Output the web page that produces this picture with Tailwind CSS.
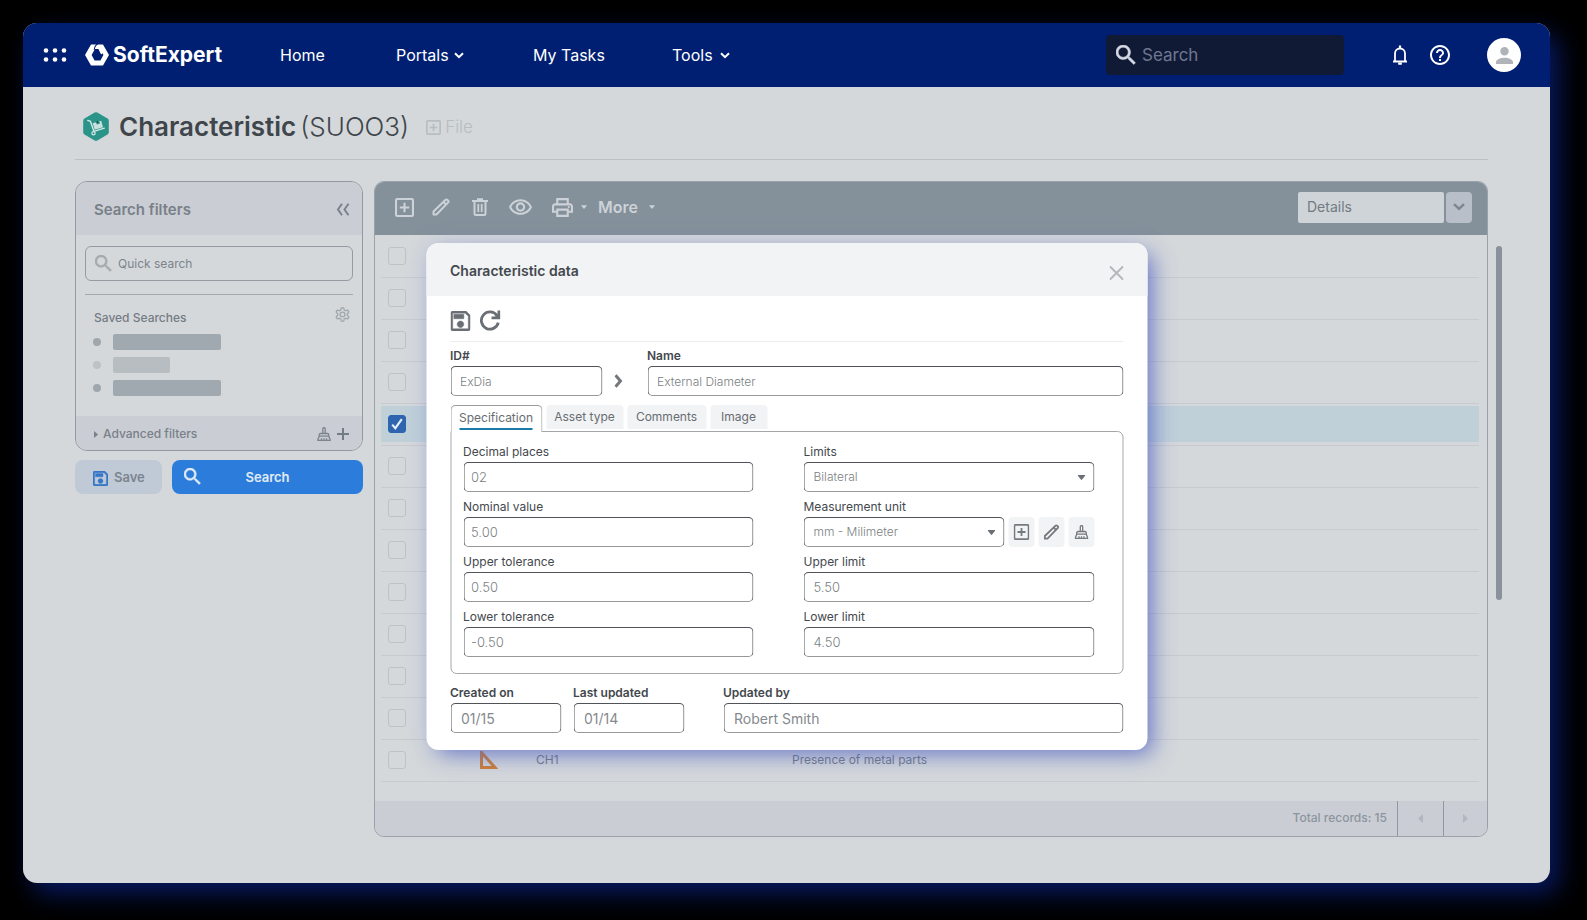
<!DOCTYPE html>
<html lang="en">
<head>
<meta charset="utf-8">
<meta name="viewport" content="width=device-width, initial-scale=1">
<title>SoftExpert – Characteristic (SU003)</title>
<script src="https://cdn.jsdelivr.net/npm/@tailwindcss/browser@4"></script>
</head>
<body class="min-h-screen bg-black pt-[23px] pr-[37px] pb-[37px] pl-[23px] font-['Inter','Open_Sans',sans-serif] text-[#6b737d]">

<!-- Icon sprite -->
<svg class="hidden" aria-hidden="true">
  <symbol id="i-search" viewBox="3 3 18 18"><path fill="currentColor" stroke="currentColor" stroke-width=".5" d="M15.5 14h-.79l-.28-.27C15.41 12.59 16 11.11 16 9.5 16 5.91 13.09 3 9.5 3S3 5.91 3 9.5 5.91 16 9.5 16c1.61 0 3.09-.59 4.23-1.57l.27.28v.79l5 4.99L20.49 19l-4.99-5zm-6 0C7.01 14 5 11.99 5 9.5S7.01 5 9.5 5 14 7.01 14 9.5 11.99 14 9.5 14z"/></symbol>
  <symbol id="i-save" viewBox="3 3 18 18"><path fill="currentColor" stroke="currentColor" stroke-width=".4" d="M17 3H5c-1.11 0-2 .9-2 2v14c0 1.1.89 2 2 2h14c1.1 0 2-.9 2-2V7l-4-4zm2 16H5V5h11.17L19 7.83V19zm-7-7c-1.66 0-3 1.34-3 3s1.34 3 3 3 3-1.34 3-3-1.34-3-3-3zM6 6h9v4H6z"/></symbol>
  <symbol id="i-refresh" viewBox="0 0 21 21"><g fill="none" stroke="currentColor" stroke-width="2.800"><path d="M17.500 5.600A8.600 8.600 0 1 0 18.800 12.600"/><path d="M12 7.900h7.400V.5"/></g><path fill="currentColor" d="M14 8.600h6V2z"/></symbol>
  <symbol id="i-add" viewBox="0 0 18 18"><g fill="none" stroke="currentColor" stroke-width="2"><rect x="1" y="1" width="16" height="16" rx="1"/><path d="M9 4.500v9M4.500 9h9"/></g></symbol>
  <symbol id="i-edit" viewBox="0 0 18 18"><g fill="none" stroke="currentColor" stroke-width="2" stroke-linejoin="round"><path d="M1.500 16.500v-3L13.600 1.800c.5-.5 1.100-.5 1.600 0l1 1c.5.500.5 1.100 0 1.600L4.500 16.500z"/><path d="M11.500 4l2.600 2.600"/></g></symbol>
  <symbol id="i-trash" viewBox="0 0 16 18"><g fill="none" stroke="currentColor" stroke-width="2"><path d="M0 3h16M5 1.200h6M2.500 3v12.500q0 1.500 1.500 1.500h8q1.500 0 1.500-1.500V3"/><path stroke-width="1.800" d="M6.300 6v8M9.700 6v8"/></g></symbol>
  <symbol id="i-eye" viewBox="1 3 22 17"><path fill="currentColor" d="M12 6c3.790 0 7.170 2.130 8.820 5.500C19.170 14.870 15.790 17 12 17s-7.170-2.130-8.820-5.500C4.830 8.130 8.210 6 12 6m0-2C7 4 2.730 7.110 1 11.500 2.730 15.890 7 19 12 19s9.270-3.110 11-7.500C21.270 7.110 17 4 12 4zm0 5c1.380 0 2.500 1.120 2.500 2.500S13.380 14 12 14s-2.500-1.120-2.500-2.500S10.620 9 12 9m0-2c-2.480 0-4.500 2.020-4.500 4.500S9.520 16 12 16s4.500-2.020 4.500-4.500S14.480 7 12 7z"/></symbol>
  <symbol id="i-print" viewBox="2 3 20 18"><path fill="currentColor" d="M19 8h-1V3H6v5H5c-1.660 0-3 1.340-3 3v6h4v4h12v-4h4v-6c0-1.660-1.340-3-3-3zM8 5h8v3H8V5zm8 12v2H8v-4h8v2zm2-2v-2H6v2H4v-4c0-.55.45-1 1-1h14c.55 0 1 .45 1 1v4h-2z"/><circle cx="18" cy="11.500" r="1" fill="currentColor"/></symbol>
  <symbol id="i-broom" viewBox="0 0 14 14"><g fill="none" stroke="currentColor" stroke-width="1.300" stroke-linejoin="round"><path d="M5.800 6.500V1.800a1.200 1.200 0 0 1 2.400 0v4.700M2.200 9.200V8q0-1.500 1.500-1.500h6.600q1.500 0 1.500 1.500v1.200M2.200 9.200h9.600l1.500 4.100H.7z"/><path d="M4.500 13v-1.800M7 13v-1.800M9.500 13v-1.800"/></g></symbol>
  <symbol id="i-caret" viewBox="0 0 8 5"><path fill="currentColor" d="M.8 0h6.400q.9 0 .4.700L4.600 4.600q-.6.700-1.200 0L.4.700Q-.1 0 .8 0z"/></symbol>
  <symbol id="i-chevron" viewBox="0 0 10 7"><path fill="none" stroke="currentColor" stroke-width="2" d="M1 1.200l4 4 4-4"/></symbol>
  <symbol id="i-gear" viewBox="1 1 22 22"><g fill="none" stroke="currentColor" stroke-width="2"><path d="M12.220 2h-.44a2 2 0 0 0-2 2v.18a2 2 0 0 1-1 1.730l-.43.25a2 2 0 0 1-2 0l-.15-.08a2 2 0 0 0-2.730.73l-.22.38a2 2 0 0 0 .73 2.730l.15.1a2 2 0 0 1 1 1.720v.51a2 2 0 0 1-1 1.740l-.15.09a2 2 0 0 0-.73 2.730l.22.38a2 2 0 0 0 2.730.73l.15-.08a2 2 0 0 1 2 0l.43.25a2 2 0 0 1 1 1.730V20a2 2 0 0 0 2 2h.44a2 2 0 0 0 2-2v-.18a2 2 0 0 1 1-1.730l.43-.25a2 2 0 0 1 2 0l.15.08a2 2 0 0 0 2.730-.73l.22-.39a2 2 0 0 0-.73-2.730l-.15-.08a2 2 0 0 1-1-1.740v-.5a2 2 0 0 1 1-1.740l.15-.09a2 2 0 0 0 .73-2.730l-.22-.38a2 2 0 0 0-2.730-.73l-.15.08a2 2 0 0 1-2 0l-.43-.25a2 2 0 0 1-1-1.730V4a2 2 0 0 0-2-2z"/><circle cx="12" cy="12" r="3.500"/></g></symbol>
</svg>

<div class="relative rounded-[14px] bg-[#d4d8db] shadow-[9px_11px_26px_-1px_#081a66]">

  <header class="flex h-16 items-center rounded-t-[14px] bg-[#001f72] pr-[29px] pl-5 text-white">
    <button type="button" aria-label="Applications" class="shrink-0">
      <svg class="h-[14px] w-6" viewBox="0 0 24 14" fill="currentColor"><circle cx="3" cy="2.500" r="2.300"/><circle cx="12" cy="2.500" r="2.300"/><circle cx="21" cy="2.500" r="2.300"/><circle cx="3" cy="11.500" r="2.300"/><circle cx="12" cy="11.500" r="2.300"/><circle cx="21" cy="11.500" r="2.300"/></svg>
    </button>
    <a href="#" class="ml-[18px] flex w-[195px] shrink-0 items-center gap-1 text-[21px] leading-6 font-bold">
      <svg class="h-[22px] w-6" viewBox="0 0 24 22"><path fill="currentColor" fill-rule="evenodd" d="M6 .5h12L24 11l-6 10.500H6L0 11zM10 5L6.600 11l3 5.500h5.800l3-5.500-.9-1.800-1.400 1.400L13.400 5z"/><path fill="none" stroke="#001f72" stroke-width="1.200" d="M12.800 0q-3 1-3.600 5.800"/></svg>
      SoftExpert
    </a>
    <nav class="flex items-center text-base leading-6">
      <a href="#" class="w-[116px]">Home</a>
      <a href="#" class="flex w-[137px] items-center gap-[5px]">Portals <svg class="h-[7px] w-[10px]"><use href="#i-chevron"/></svg></a>
      <a href="#" class="w-[139px]">My Tasks</a>
      <a href="#" class="flex items-center gap-[7px]">Tools <svg class="h-[7px] w-[10px]"><use href="#i-chevron"/></svg></a>
    </nav>
    <label class="ml-auto flex h-[40px] w-[238px] items-center gap-[6px] rounded-sm bg-[#111a35] pl-[10px]">
      <svg class="size-5 shrink-0 text-[#d5dae6]"><use href="#i-search"/></svg>
      <input type="search" aria-label="Search" placeholder="Search" class="w-full min-w-0 bg-transparent pt-[2px] text-[17px] outline-none placeholder:text-[#6e7792]">
    </label>
    <button type="button" aria-label="Notifications" class="ml-[46px]"><svg class="h-5 w-5" viewBox="0 0 20 20" fill="none" stroke="currentColor" stroke-width="1.800"><path d="M3 16.500h14M5 16.500V8.500a5 5 0 0 1 10 0v8"/><path d="M10 .5v3M8.200 18.600h3.600" stroke-width="2.200"/></svg></button>
    <button type="button" aria-label="Help" class="ml-5"><svg class="h-5 w-5" viewBox="2 2 20 20"><path fill="currentColor" d="M11 18h2v-2h-2v2zm1-16C6.480 2 2 6.480 2 12s4.480 10 10 10 10-4.480 10-10S17.520 2 12 2zm0 18c-4.410 0-8-3.590-8-8s3.590-8 8-8 8 3.590 8 8-3.590 8-8 8zm0-14c-2.210 0-4 1.790-4 4h2c0-1.100.9-2 2-2s2 .9 2 2c0 2-3 1.750-3 5h2c0-2.250 3-2.500 3-5 0-2.210-1.790-4-4-4z"/></svg></button>
    <button type="button" aria-label="Account" class="ml-[37px] grid size-[34px] place-items-center rounded-full bg-white text-[#b0b3b8]"><svg class="h-[17px] w-[17px]" viewBox="4 4 16 16"><path fill="currentColor" d="M12 12c2.210 0 4-1.790 4-4s-1.790-4-4-4-4 1.790-4 4 1.790 4 4 4zm0 2c-2.670 0-8 1.340-8 4v2h16v-2c0-2.660-5.330-4-8-4z"/></svg></button>
  </header>

  <main class="pr-12 pb-[46px] pl-[52px]">
    <div class="mr-[14px] flex h-[73px] items-center border-b border-[#bbc0c4] pt-[7px] pl-2">
      <svg class="h-[29px] w-[26px]" viewBox="0 0 26 29"><path fill="#2a9488" d="M11.700.6q1.300-.7 2.600 0l10.200 5.900q1.300.8 1.300 2.200v11.600q0 1.400-1.300 2.200l-10.200 5.900q-1.300.7-2.600 0L1.500 22.500Q.2 21.700.2 20.300V8.700q0-1.400 1.300-2.200z"/><path fill="none" stroke="#d4e6e5" stroke-width="1.400" stroke-linecap="round" stroke-linejoin="round" d="M4.800 8.500l2.500.6L11 19.400l10.300-3.200"/><path fill="#c9e0de" d="M9.700 11.200l8.500-2.400 1.800 6.500-8.300 2.500z"/><path stroke="#2a9488" stroke-width="1.300" d="M13.300 9.800l.9 1.800 2-.6-.8-1.700"/><circle cx="10.500" cy="21.300" r="1.600" fill="#2a9488" stroke="#d4e6e5" stroke-width="1.300"/></svg>
      <h1 class="ml-[10px] flex gap-1 text-[26px] leading-8 font-semibold text-[#3f464b]">Characteristic <span class="font-light">(SUOO3)</span></h1>
      <button type="button" class="ml-[17px] flex items-center gap-1 pt-[2px] text-[17px] font-light text-[#b7bdc1]"><svg class="size-[15px]"><use href="#i-add"/></svg>File</button>
    </div>

    <div class="mt-[21px] flex items-start">
      <!-- Search filters -->
      <aside class="w-[288px] shrink-0">
        <section class="overflow-hidden rounded-xl border border-[#9299a2]">
          <div class="flex h-[53px] items-center justify-between bg-[#cacdd3] pr-3 pt-[2px] pl-[18px]">
            <h2 class="text-[15px] leading-6 font-semibold text-[#78808a]">Search filters</h2>
            <button type="button" aria-label="Collapse filters"><svg class="h-[13px] w-[14px]" viewBox="0 0 14 13" fill="none" stroke="#7a828c" stroke-width="2"><path d="M6 .8L2 6.500l4 5.700M12.500.8l-4 5.700 4 5.700"/></svg></button>
          </div>
          <div class="px-[9px] pt-[11px]">
            <label class="flex h-[35px] items-center gap-[6px] rounded-md border border-[#959ba3] pl-[9px]">
              <svg class="size-[17px] shrink-0 text-[#a4abb0]"><use href="#i-search"/></svg>
              <input type="search" aria-label="Quick search" placeholder="Quick search" class="w-full min-w-0 bg-transparent text-xs outline-none placeholder:text-[#7c848b]">
            </label>
            <div class="mt-[13px] border-t border-[#a2a8ad] pt-[11px] pb-5">
              <div class="flex h-5 items-center justify-between pr-[3px] pl-[9px]">
                <h3 class="pt-1 text-xs font-medium text-[#747c84]">Saved Searches</h3>
                <button type="button" aria-label="Search settings"><svg class="size-[15px] -mt-1 text-[#a0a7ae]"><use href="#i-gear"/></svg></button>
              </div>
              <ul class="mt-2 space-y-[7px] pl-2">
                <li class="flex h-4 items-center gap-3"><span class="size-2 rounded-full bg-[#9fa7ae]"></span><span class="h-4 w-[108px] rounded-xs bg-[#a1a9b0]"></span></li>
                <li class="flex h-4 items-center gap-3"><span class="size-2 rounded-full bg-[#bdc2c6]"></span><span class="h-4 w-[57px] rounded-xs bg-[#b8bdc1]"></span></li>
                <li class="flex h-4 items-center gap-3"><span class="size-2 rounded-full bg-[#9fa7ae]"></span><span class="h-4 w-[108px] rounded-xs bg-[#a1a9b0]"></span></li>
              </ul>
            </div>
          </div>
          <div class="flex h-[34px] items-center bg-[#cacdd3] pt-[2px] pr-[13px] pl-[18px]">
            <button type="button" class="mr-auto flex items-center gap-[5px] text-xs font-medium text-[#78808a]"><svg class="h-[7px] w-[4px]" viewBox="0 0 4 7"><path fill="currentColor" d="M0 0l4 3.500L0 7z"/></svg>Advanced filters</button>
            <button type="button" aria-label="Clear filters"><svg class="size-[14px] text-[#7c848c]"><use href="#i-broom"/></svg></button>
            <button type="button" aria-label="Add filter" class="ml-[6px]"><svg class="size-3" viewBox="0 0 12 12" stroke="#737b84" stroke-width="2"><path d="M6 0v12M0 6h12"/></svg></button>
          </div>
        </section>
        <div class="mt-[9px] flex gap-[10px]">
          <button type="button" class="flex h-[34px] w-[87px] items-center gap-[6px] rounded-lg bg-[#bfcad6] pt-[2px] pl-[18px] text-[13px] font-semibold text-[#7b858f]"><svg class="size-[15px] text-[#3576c8]"><use href="#i-save"/></svg>Save</button>
          <button type="button" class="relative flex h-[34px] flex-1 items-center justify-center rounded-lg bg-[#2c7ddb] pt-[2px] text-[13px] font-semibold text-[#e2ebf5]"><svg class="absolute top-2 left-[12px] size-[17px]"><use href="#i-search"/></svg>Search</button>
        </div>
      </aside>

      <!-- Records -->
      <section class="ml-[11px] min-w-0 flex-1 overflow-hidden rounded-[10px] border border-[#9aa1a9]">
        <div class="flex h-[53px] items-center bg-[#84909a] pr-[15px] pb-[3px] pl-5 text-[#ccd2d7]">
          <button type="button" aria-label="New"><svg class="size-[19px]"><use href="#i-add"/></svg></button>
          <button type="button" aria-label="Edit" class="ml-[18px]"><svg class="size-[18px]"><use href="#i-edit"/></svg></button>
          <button type="button" aria-label="Delete" class="ml-[22px]"><svg class="h-[18px] w-4"><use href="#i-trash"/></svg></button>
          <button type="button" aria-label="View" class="ml-[21px]"><svg class="h-[18px] w-[23px]"><use href="#i-eye"/></svg></button>
          <button type="button" aria-label="Print" class="ml-5 flex items-center gap-[8px]"><svg class="h-[19px] w-[21px]"><use href="#i-print"/></svg><svg class="h-1 w-[6px]"><use href="#i-caret"/></svg></button>
          <button type="button" class="ml-[11px] flex items-center gap-[11px] text-base font-semibold">More <svg class="h-1 w-[6px]"><use href="#i-caret"/></svg></button>
          <div class="ml-auto flex gap-[2px]">
            <select aria-label="View mode" class="h-[31px] w-[146px] appearance-none rounded-xs bg-[#ced4d8] pl-[9px] text-sm text-[#737b83]"><option>Details</option></select>
            <button type="button" aria-label="Choose view" class="grid h-[31px] w-[26px] place-items-center rounded-sm bg-[#b8bfc8] text-[#7d8691]"><svg class="h-[8px] w-3" viewBox="0 0 12 8" fill="none" stroke="currentColor" stroke-width="2.500"><path d="M1 1.200l5 4.600 5-4.600"/></svg></button>
          </div>
        </div>
        <div class="pr-2 pb-[19px] pl-[6px]">
          <table class="w-full table-fixed text-left text-xs text-[#737b84]">
            <colgroup><col class="w-[99px]"><col class="w-[56px]"><col class="w-[256px]"><col></colgroup>
            <tbody id="records"></tbody>
          </table>
        </div>
        <div class="flex h-[35px] bg-[#cacdd3]">
          <p class="mr-[10px] ml-auto self-center text-xs font-medium text-[#8b959f]">Total records: 15</p>
          <button type="button" aria-label="Previous page" class="grid w-[46px] place-items-center border-l border-[#9198a2]"><svg class="h-[9px] w-[5px]" viewBox="0 0 5 9"><path fill="#b1b7be" d="M5 0L0 4.500 5 9z"/></svg></button>
          <button type="button" aria-label="Next page" class="grid w-[44px] place-items-center border-l border-[#9198a2]"><svg class="h-[9px] w-[5px]" viewBox="0 0 5 9"><path fill="#b1b7be" d="M0 0l5 4.500L0 9z"/></svg></button>
        </div>
      </section>
      <div class="mt-[65px] ml-2 h-[354px] w-[6px] shrink-0 rounded-full bg-[#89929b]"></div>
    </div>
  </main>

  <!-- Characteristic data dialog -->
  <div role="dialog" aria-labelledby="dlg-title" class="absolute top-[220px] left-1/2 w-full max-w-[721px] -translate-x-1/2 rounded-xl bg-white text-[#43484d] shadow-[8px_8px_22px_-4px_#4356bfb3,0_0_20px_0_#a9add640]">
    <div class="flex h-[53px] items-center justify-between rounded-t-xl bg-[#f2f3f5] px-6 pt-[2px]">
      <h2 id="dlg-title" class="text-sm font-semibold">Characteristic data</h2>
      <button type="button" aria-label="Close"><svg class="mt-1 size-[14px]" viewBox="0 0 14 14" stroke="#b5b8bb" stroke-width="2" stroke-linecap="round"><path d="M1 1l12 12M13 1L1 13"/></svg></button>
    </div>
    <form class="px-6 pb-[17px]">
      <div class="flex h-[46px] items-center gap-[9px] border-b border-[#ebecee] pt-1 text-[#6a6f75]">
        <button type="button" aria-label="Save record"><svg class="size-5"><use href="#i-save"/></svg></button>
        <button type="button" aria-label="Reload"><svg class="size-[21px]"><use href="#i-refresh"/></svg></button>
      </div>
      <div class="mt-[6px] flex items-end">
        <div class="w-[152px]">
          <label for="f-id" class="block h-[18px] text-xs leading-4 font-semibold">ID#</label>
          <input id="f-id" value="ExDia" class="block h-[30px] w-full rounded-[5px] border border-[#505459] border-b-[#96999c] px-[9px] text-xs font-light text-[#7b7f83]">
        </div>
        <svg class="mr-auto mb-2 ml-3 h-[14px] w-2" viewBox="0 0 8 14" fill="none" stroke="#74787d" stroke-width="3"><path d="M1 1.200L6 7l-5 5.800"/></svg>
        <div class="w-[476px]">
          <label for="f-name" class="block h-[18px] text-xs leading-4 font-semibold">Name</label>
          <input id="f-name" value="External Diameter" class="block h-[30px] w-full rounded-[5px] border border-[#505459] border-b-[#96999c] px-[9px] text-xs font-light text-[#7b7f83]">
        </div>
      </div>

      <div role="tablist" class="mt-[9px] flex gap-1 text-xs leading-5 text-[#686d72]">
        <button type="button" role="tab" aria-selected="true" class="relative z-10 -mb-px flex h-[27px] w-[92px] items-start justify-center rounded-t-[5px] border border-b-0 border-[#9a9da0] bg-white pt-[2px]"><span class="border-b-2 border-[#1b7aa6]">Specification</span></button>
        <button type="button" role="tab" class="h-[24px] w-[77px] rounded-t-[4px] bg-[#f2f3f5]">Asset type</button>
        <button type="button" role="tab" class="h-[24px] w-[79px] rounded-t-[4px] bg-[#f2f3f5]">Comments</button>
        <button type="button" role="tab" class="h-[24px] w-[57px] rounded-t-[4px] bg-[#f2f3f5]">Image</button>
      </div>

      <div role="tabpanel" class="grid grid-cols-2 gap-x-[50px] gap-y-[7px] rounded-[6px] rounded-tl-none border border-[#a4a7aa] pt-3 pr-7 pb-4 pl-3 text-xs">
        <div>
          <label for="f-dec" class="block h-[18px] leading-4">Decimal places</label>
          <input id="f-dec" value="02" class="block h-[30px] w-full rounded-[5px] border border-[#505459] border-b-[#96999c] px-[7px] text-[13px] font-light text-[#7b7f83]">
        </div>
        <div>
          <label for="f-lim" class="block h-[18px] leading-4">Limits</label>
          <div class="relative">
            <select id="f-lim" class="block h-[30px] w-full appearance-none rounded-[5px] border border-[#505459] border-b-[#96999c] px-[9px] font-light text-[#7b7f83]"><option>Bilateral</option></select>
            <svg class="pointer-events-none absolute top-[13px] right-[9px] h-[5px] w-2 text-[#6a6f75]"><use href="#i-caret"/></svg>
          </div>
        </div>
        <div>
          <label for="f-nom" class="block h-[18px] leading-4">Nominal value</label>
          <input id="f-nom" value="5.00" class="block h-[30px] w-full rounded-[5px] border border-[#505459] border-b-[#96999c] px-[7px] text-[13px] font-light text-[#7b7f83]">
        </div>
        <div>
          <label for="f-unit" class="block h-[18px] leading-4">Measurement unit</label>
          <div class="flex gap-1 text-[#74797e]">
            <div class="relative flex-1">
              <select id="f-unit" class="block h-[30px] w-full appearance-none rounded-[5px] border border-[#505459] border-b-[#96999c] px-[9px] font-light text-[#7b7f83]"><option>mm - Milimeter</option></select>
              <svg class="pointer-events-none absolute top-[13px] right-[9px] h-[5px] w-2 text-[#6a6f75]"><use href="#i-caret"/></svg>
            </div>
            <button type="button" aria-label="Add unit" class="grid h-[30px] w-[26px] place-items-center rounded-sm bg-[#f2f3f5]"><svg class="size-4"><use href="#i-add"/></svg></button>
            <button type="button" aria-label="Edit unit" class="grid h-[30px] w-[26px] place-items-center rounded-sm bg-[#f2f3f5]"><svg class="size-4"><use href="#i-edit"/></svg></button>
            <button type="button" aria-label="Clear unit" class="grid h-[30px] w-[26px] place-items-center rounded-sm bg-[#f2f3f5]"><svg class="size-[14px]"><use href="#i-broom"/></svg></button>
          </div>
        </div>
        <div>
          <label for="f-ut" class="block h-[18px] leading-4">Upper tolerance</label>
          <input id="f-ut" value="0.50" class="block h-[30px] w-full rounded-[5px] border border-[#505459] border-b-[#96999c] px-[7px] text-[13px] font-light text-[#7b7f83]">
        </div>
        <div>
          <label for="f-ul" class="block h-[18px] leading-4">Upper limit</label>
          <input id="f-ul" value="5.50" class="block h-[30px] w-full rounded-[5px] border border-[#505459] border-b-[#96999c] px-[9px] text-[13px] font-light text-[#7b7f83]">
        </div>
        <div>
          <label for="f-lt" class="block h-[18px] leading-4">Lower tolerance</label>
          <input id="f-lt" value="-0.50" class="block h-[30px] w-full rounded-[5px] border border-[#505459] border-b-[#96999c] px-[7px] text-[13px] font-light text-[#7b7f83]">
        </div>
        <div>
          <label for="f-ll" class="block h-[18px] leading-4">Lower limit</label>
          <input id="f-ll" value="4.50" class="block h-[30px] w-full rounded-[5px] border border-[#505459] border-b-[#96999c] px-[9px] text-[13px] font-light text-[#7b7f83]">
        </div>
      </div>

      <div class="mt-[11px] flex text-[14px] text-[#85898d]">
        <div class="w-[111px]">
          <label for="f-created" class="block h-[18px] text-xs leading-4 font-semibold text-[#43484d]">Created on</label>
          <input id="f-created" value="01/15" class="block h-[30px] w-full rounded-[5px] border border-[#505459] border-b-[#96999c] px-[10px]">
        </div>
        <div class="ml-3 w-[111px]">
          <label for="f-updated" class="block h-[18px] text-xs leading-4 font-semibold text-[#43484d]">Last updated</label>
          <input id="f-updated" value="01/14" class="block h-[30px] w-full rounded-[5px] border border-[#505459] border-b-[#96999c] px-[10px]">
        </div>
        <div class="ml-[39px] flex-1">
          <label for="f-by" class="block h-[18px] text-xs leading-4 font-semibold text-[#43484d]">Updated by</label>
          <input id="f-by" value="Robert Smith" class="block h-[30px] w-full rounded-[5px] border border-[#505459] border-b-[#96999c] px-[10px]">
        </div>
      </div>
    </form>
  </div>
</div>

<script>
  const rows = Array.from({ length: 13 }, () => ({}));
  rows[4].selected = true;
  rows[12] = { id: "CH1", name: "Presence of metal parts" };
  const setSquare = '<svg class="h-[18px] w-[18px]" viewBox="0 0 18 18" fill="none" stroke="#cf7f38" stroke-width="3"><path d="M1.500 1.500v15h13.500z"/></svg>';
  const tick = '<svg class="pointer-events-none absolute inset-[3px] size-[12px]" viewBox="0 0 10 10" fill="none" stroke="#e3eef8" stroke-width="1.800"><path d="M1 5.500l2.600 3L9 1"/></svg>';
  document.getElementById("records").innerHTML = rows.map((r, i) => `
    <tr class="h-[42px] border-b border-[#c6cbcf] ${r.selected ? "bg-[linear-gradient(to_bottom,transparent_3px,#bfd0d9_3px,#bfd0d9_39px,transparent_39px)]" : ""}">
      <td class="pl-[7px]"><span class="relative block size-[18px]"><input type="checkbox" aria-label="Select record ${i + 1}" ${r.selected ? "checked" : ""} class="block size-[18px] appearance-none rounded-[3px] border border-[#bdc2c7] checked:border-[#2f65ae] checked:bg-[#2f65ae]">${r.selected ? tick : ""}</span></td>
      <td>${r.id ? setSquare : ""}</td><td>${r.id || ""}</td><td>${r.name || ""}</td>
    </tr>`).join("");
</script>
</body>
</html>
